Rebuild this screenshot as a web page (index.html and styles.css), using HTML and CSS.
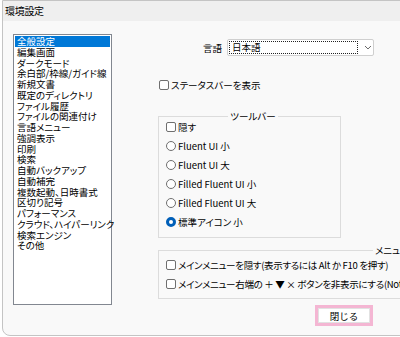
FILE: index.html
```html
<!DOCTYPE html>
<html lang="ja">
<head>
    <meta charset="UTF-8">
    <title>環境設定</title>
    <link rel="stylesheet" href="styles.css">
</head>
<body>
    <div class="window">
        <div class="titlebar">環境設定</div>

        <div class="content">
            <ul class="category-list">
                <li class="selected">全般設定</li>
                <li>編集画面</li>
                <li>ダークモード</li>
                <li>余白部/枠線/ガイド線</li>
                <li>新規文書</li>
                <li>既定のディレクトリ</li>
                <li>ファイル履歴</li>
                <li>ファイルの関連付け</li>
                <li>言語メニュー</li>
                <li>強調表示</li>
                <li>印刷</li>
                <li>検索</li>
                <li>自動バックアップ</li>
                <li>自動補完</li>
                <li>複数起動、日時書式</li>
                <li>区切り記号</li>
                <li>パフォーマンス</li>
                <li>クラウド、ハイパーリンク</li>
                <li>検索エンジン</li>
                <li>その他</li>
            </ul>

            <div class="panel">
                <div class="lang-row">
                    <span class="lang-label">言語</span>
                    <div class="select">
                        <span class="select-focus">日本語</span>
                        <svg class="select-arrow" width="8" height="5" viewBox="0 0 8 5">
                            <path d="M1 1 L4 4 L7 1" fill="none" stroke="#666" stroke-width="1"/>
                        </svg>
                    </div>
                </div>

                <div class="option status-row">
                    <span class="check"></span>ステータスバーを表示
                </div>

                <fieldset class="group toolbar-group">
                    <legend>ツールバー</legend>
                    <div class="option"><span class="check"></span>隠す</div>
                    <div class="option"><span class="radio"></span>Fluent UI 小</div>
                    <div class="option"><span class="radio"></span>Fluent UI 大</div>
                    <div class="option"><span class="radio"></span>Filled Fluent UI 小</div>
                    <div class="option"><span class="radio"></span>Filled Fluent UI 大</div>
                    <div class="option"><span class="radio on"></span>標準アイコン 小</div>
                </fieldset>

                <fieldset class="group menu-group">
                    <legend>メニュー</legend>
                    <div class="option"><span class="check"></span>メインメニューを隠す(表示するには Alt か F10 を押す)</div>
                    <div class="option"><span class="check"></span>メインメニュー右端の ＋ ▼ × ボタンを非表示にする(Notepad互換)</div>
                </fieldset>

                <div class="close-wrap">
                    <button class="close-btn">閉じる</button>
                </div>
            </div>
        </div>
    </div>
</body>
</html>
```

FILE: styles.css
```css
* {
    margin: 0;
    padding: 0;
    box-sizing: border-box;
}

body {
    font-family: "Noto Sans CJK JP", sans-serif;
    font-size: 9.5px;
    color: #000;
    background: #ffffff;
    width: 400px;
    height: 337px;
    overflow: hidden;
}

.window {
    margin-left: 2px;
    width: 440px;
    height: 336px;
    background: #f9f9f9;
    border: 1px solid #c4c4c4;
    border-radius: 0 0 8px 8px;
    overflow: hidden;
}

.titlebar {
    height: 20px;
    line-height: 20px;
    padding-left: 2px;
    background: #efefef;
    font-size: 10px;
    letter-spacing: -0.3px;
}

.content {
    display: flex;
    align-items: flex-start;
    padding: 13px 0 0 10px;
    font-feature-settings: "palt";
}

/* left category list */
.category-list {
    list-style: none;
    width: 99px;
    height: 271px;
    background: #fff;
    border: 1px solid #828790;
    padding: 1px 1px 0 1px;
}

.category-list li {
    height: 10.75px;
    line-height: 10.75px;
    padding-left: 2px;
    white-space: nowrap;
}

.category-list li.selected {
    background: #0078d7;
    color: #fff;
}

/* right side */
.panel {
    margin-left: 46px;
    display: flex;
    flex-direction: column;
}

.lang-row {
    display: flex;
    align-items: center;
    margin-top: 5px;
    padding-left: 45px;
    gap: 5px;
}

.select {
    display: flex;
    align-items: center;
    width: 147px;
    height: 17px;
    background: #fff;
    border: 1px solid #cfcfcf;
    border-radius: 2px;
    padding: 1px;
}

.select-focus {
    width: 130px;
    height: 13px;
    line-height: 11px;
    border: 1px dotted #222;
    padding-left: 2px;
}

.select-arrow {
    margin-left: 6px;
}

.option {
    display: flex;
    align-items: center;
    height: 12px;
    white-space: nowrap;
}

.check,
.radio {
    display: inline-block;
    flex: none;
    width: 10px;
    height: 10px;
    margin-right: 2px;
    background: #fff;
    border: 1px solid #6f6f6f;
}

.check {
    border-radius: 2px;
}

.radio {
    border-radius: 50%;
}

.radio.on {
    border: 3px solid #005fb8;
}

.status-row {
    margin-top: 23px;
    margin-left: 1px;
}

.group {
    border: 1px solid #dcdcdc;
    display: flex;
    flex-direction: column;
    gap: 7px;
    min-width: 0;
}

.group legend {
    line-height: 10px;
    padding: 0 2px;
}

.toolbar-group {
    width: 183px;
    margin-top: 20px;
    padding: 0 0 9px 7px;
}

.toolbar-group legend {
    margin: 0 auto;
}

.menu-group {
    width: 300px;
    margin-top: 7px;
    padding: 4px 0 8px 7px;
}

.menu-group legend {
    margin-left: 207px;
}

.menu-group .option {
    letter-spacing: -0.3px;
}

.close-wrap {
    margin: 6px 0 0 157px;
    width: 58px;
    height: 21px;
    border: 3px solid #f4b6d3;
}

.close-btn {
    display: block;
    width: 100%;
    height: 100%;
    font-family: inherit;
    font-size: 9.5px;
    background: #fff;
    border: 1px solid #e2e2e2;
    color: #000;
}
```
